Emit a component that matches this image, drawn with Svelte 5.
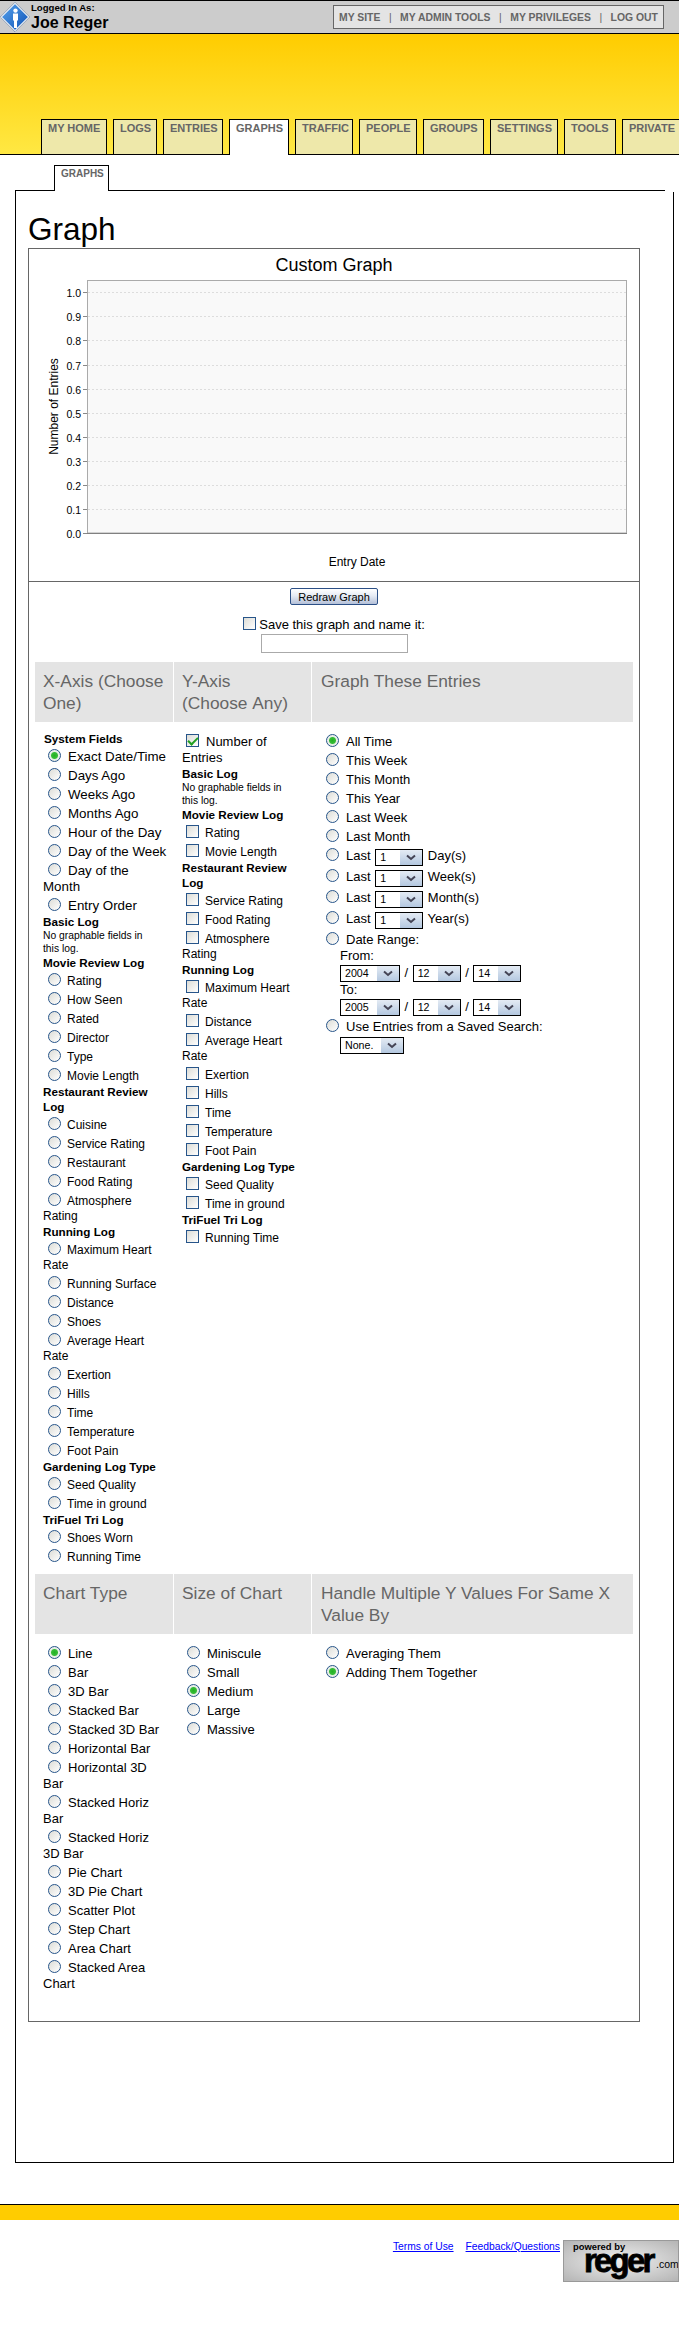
<script>
  const tabs = [['MY HOME',66],['LOGS',44],['ENTRIES',60],['GRAPHS',60],['TRAFFIC',58],['PEOPLE',58],['GROUPS',61],['SETTINGS',68],['TOOLS',52],['PRIVATE',70]];
  const ticks = [0,1,2,3,4,5,6,7,8,9,10];
  const noFields = 'No graphable fields in this log.';
  const xAxis = [
    ['g','System Fields'],
    ['o','Exact Date/Time',true],['o','Days Ago'],['o','Weeks Ago'],['o','Months Ago'],['o','Hour of the Day'],['o','Day of the Week'],['o','Day of the Month'],['o','Entry Order'],
    ['g','Basic Log'],['s',noFields],
    ['g','Movie Review Log'],
    ['m','Rating'],['m','How Seen'],['m','Rated'],['m','Director'],['m','Type'],['m','Movie Length'],
    ['g','Restaurant Review Log'],
    ['m','Cuisine'],['m','Service Rating'],['m','Restaurant'],['m','Food Rating'],['m','Atmosphere Rating'],
    ['g','Running Log'],
    ['m','Maximum Heart Rate'],['m','Running Surface'],['m','Distance'],['m','Shoes'],['m','Average Heart Rate'],['m','Exertion'],['m','Hills'],['m','Time'],['m','Temperature'],['m','Foot Pain'],
    ['g','Gardening Log Type'],
    ['m','Seed Quality'],['m','Time in ground'],
    ['g','TriFuel Tri Log'],
    ['m','Shoes Worn'],['m','Running Time']
  ];
  const yAxis = [
    ['o','Number of Entries',true],
    ['g','Basic Log'],['s',noFields],
    ['g','Movie Review Log'],
    ['m','Rating'],['m','Movie Length'],
    ['g','Restaurant Review Log'],
    ['m','Service Rating'],['m','Food Rating'],['m','Atmosphere Rating'],
    ['g','Running Log'],
    ['m','Maximum Heart Rate'],['m','Distance'],['m','Average Heart Rate'],['m','Exertion'],['m','Hills'],['m','Time'],['m','Temperature'],['m','Foot Pain'],
    ['g','Gardening Log Type'],
    ['m','Seed Quality'],['m','Time in ground'],
    ['g','TriFuel Tri Log'],
    ['m','Running Time']
  ];
  const plainRanges = ['This Week','This Month','This Year','Last Week','Last Month'];
  const lastRanges = ['Day(s)','Week(s)','Month(s)','Year(s)'];
  const chartTypes = ['Line','Bar','3D Bar','Stacked Bar','Stacked 3D Bar','Horizontal Bar','Horizontal 3D Bar','Stacked Horiz Bar','Stacked Horiz 3D Bar','Pie Chart','3D Pie Chart','Scatter Plot','Step Chart','Area Chart','Stacked Area Chart'];
  const sizes = ['Miniscule','Small','Medium','Large','Massive'];
</script>

{#snippet fields(list, type, name)}
  {#each list as [kind, text, checked]}
    {#if kind === 'g'}
      <div class="grp">{text}</div>
    {:else if kind === 's'}
      <div class="small">{text}</div>
    {:else}
      <label class="opt" class:sm={kind === 'm'}><input {type} {name} {checked} />{text}</label>
    {/if}
  {/each}
{/snippet}

{#snippet dateRow(year)}
  <div class="selrow">
    <select class="w60"><option>{year}</option></select><span>/</span>
    <select class="w48"><option>12</option></select><span>/</span>
    <select class="w48"><option>14</option></select>
  </div>
{/snippet}

<div class="page">
  <header class="top">
    <div class="who">
      <svg class="badge" width="30" height="30" viewBox="0 0 30 30" aria-hidden="true">
        <defs>
          <linearGradient id="dia" x1="0" y1="0" x2="1" y2="1">
            <stop offset="0" stop-color="#5aa6ee" />
            <stop offset="1" stop-color="#0b4fb4" />
          </linearGradient>
        </defs>
        <path d="M15 1 29 15 15 29 1 15Z" fill="url(#dia)" stroke="#fff" stroke-width="1.6" />
        <path d="M15 .3 29.7 15 15 29.7 .3 15Z" fill="none" stroke="#33507a" stroke-width=".6" />
        <circle cx="15.5" cy="8.6" r="2.2" fill="#fff" />
        <path d="M13 11.5h5v7h-1V26h-3v-7.5h-1Z" fill="#fff" />
      </svg>
      <div>
        <div class="logged">Logged In As:</div>
        <div class="name">Joe Reger</div>
      </div>
    </div>
    <nav class="tools">
      <span>MY SITE</span><i>|</i><span>MY ADMIN TOOLS</span><i>|</i><span>MY PRIVILEGES</span><i>|</i><span>LOG OUT</span>
    </nav>
  </header>

  <div class="banner">
    {#each tabs as [t, w]}
      <div class="tab" class:on={t === 'GRAPHS'} style:width="{w}px">{t}</div>
    {/each}
  </div>

  <div class="subtabs"><div class="subtab">GRAPHS</div></div>

  <main class="panel">
    <h1>Graph</h1>
    <section class="box">
      <svg class="chart" width="610" height="332" viewBox="0 0 610 332">
        <text x="305" y="22" text-anchor="middle" class="c-title">Custom Graph</text>
        <rect x="58.5" y="31.5" width="539" height="252.5" fill="#f9f9f9" stroke="#aaa" />
        {#each ticks as i}
          {@const y = Math.round(284 - i * 24.07) + 0.5}
          {#if i > 0}
            <line x1="59" x2="597" y1={y} y2={y} stroke="#ddd" stroke-dasharray="2 2" />
          {/if}
          <line x1="54" x2="58" y1={y} y2={y} stroke="#888" />
          <text x="52" y={y + 4} text-anchor="end" class="c-tick">{(i / 10).toFixed(1)}</text>
        {/each}
        <line x1="58" x2="598" y1="284.5" y2="284.5" stroke="#808080" />
        <text transform="translate(29 157.5) rotate(-90)" text-anchor="middle" class="c-axis">Number of Entries</text>
        <text x="328" y="317" text-anchor="middle" class="c-axis">Entry Date</text>
      </svg>

      <form class="form">
        <div class="actions">
          <button type="button" class="redraw">Redraw Graph</button>
          <label class="save"><input type="checkbox" />Save this graph and name it:</label>
          <input class="namefield" type="text" />
        </div>

        <div class="table">
          <h3>X-Axis (Choose One)</h3>
          <h3>Y-Axis (Choose&nbsp;Any)</h3>
          <h3>Graph These Entries</h3>

          <div class="cell sys">{@render fields(xAxis, 'radio', 'x')}</div>
          <div class="cell">{@render fields(yAxis, 'checkbox', 'y')}</div>
          <div class="cell wide">
            <label class="opt"><input type="radio" name="range" checked />All Time</label>
            {#each plainRanges as r}
              <label class="opt"><input type="radio" name="range" />{r}</label>
            {/each}
            {#each lastRanges as r}
              <label class="opt sel"><input type="radio" name="range" />Last <select class="w48 inl"><option>1</option></select> {r}</label>
            {/each}
            <label class="opt"><input type="radio" name="range" />Date Range:</label>
            <div class="indent">
              <div class="lbl">From:</div>
              {@render dateRow(2004)}
              <div class="lbl">To:</div>
              {@render dateRow(2005)}
            </div>
            <label class="opt"><input type="radio" name="range" />Use Entries from a Saved Search:</label>
            <div class="indent none"><select class="w64"><option>None.</option></select></div>
          </div>

          <h3>Chart Type</h3>
          <h3>Size of Chart</h3>
          <h3>Handle Multiple Y Values For Same X Value By</h3>

          <div class="cell">
            {#each chartTypes as c}
              <label class="opt"><input type="radio" name="type" checked={c === 'Line'} />{c}</label>
            {/each}
          </div>
          <div class="cell">
            {#each sizes as s}
              <label class="opt"><input type="radio" name="size" checked={s === 'Medium'} />{s}</label>
            {/each}
          </div>
          <div class="cell wide">
            <label class="opt"><input type="radio" name="multi" />Averaging Them</label>
            <label class="opt"><input type="radio" name="multi" checked />Adding Them Together</label>
          </div>
        </div>
      </form>
    </section>
  </main>

  <footer class="foot">
    <div class="stripe"></div>
    <div class="links">
      <a href="#terms">Terms of Use</a>
      <a href="#feedback">Feedback/Questions</a>
      <div class="reger">
        <span class="pow">powered by</span>
        <span class="rg">reger</span>
        <span class="com">.com</span>
      </div>
    </div>
  </footer>
</div>

<style>
  :global(body) { margin: 0; background: #fff; }
  .page {
    width: 679px;
    height: 2342px;
    overflow: hidden;
    font-family: "Liberation Sans", Arial, sans-serif;
    color: #000;
  }

  .top {
    box-sizing: border-box;
    height: 34px;
    background: #ccc;
    border-top: 1px solid #000;
    border-bottom: 1px solid #000;
    display: flex;
    justify-content: space-between;
    align-items: flex-start;
    padding-right: 15px;
  }
  .who { display: flex; }
  .badge { display: block; margin: 1px 1px 0 0; }
  .logged { font-size: 9.6px; font-weight: bold; line-height: 11px; margin-top: 1px; }
  .name { font-size: 16px; font-weight: bold; line-height: 18px; margin-top: 1px; }
  .tools {
    box-sizing: border-box;
    width: 331px;
    height: 24px;
    margin-top: 4px;
    background: #e4e4e4;
    border: 1px solid #666;
    display: flex;
    justify-content: space-between;
    align-items: center;
    padding: 0 5px;
    font-size: 10.4px;
    font-weight: bold;
    color: #666;
    white-space: nowrap;
  }
  .tools i { font-style: normal; font-weight: normal; }

  .banner {
    box-sizing: border-box;
    height: 121px;
    background: linear-gradient(#ffcc00, #ffe843);
    border-bottom: 1px solid #000;
    display: flex;
    align-items: flex-end;
    gap: 6px;
    padding-left: 41px;
  }
  .tab {
    box-sizing: border-box;
    flex: none;
    height: 35px;
    background: #eee8aa;
    border: 1px solid #000;
    border-bottom: 0;
    padding: 2px 0 0 6px;
    font-size: 11px;
    font-weight: bold;
    line-height: 13px;
    color: #666;
    white-space: nowrap;
  }
  .tab.on {
    background: #fff;
    height: 36px;
    margin-bottom: -1px;
  }

  .subtabs { padding: 10px 0 0 54px; position: relative; z-index: 1; }
  .subtab {
    box-sizing: border-box;
    width: 55px;
    height: 26px;
    margin-bottom: -1px;
    background: #fff;
    border: 1px solid #000;
    border-bottom: 0;
    font-size: 10px;
    font-weight: bold;
    line-height: 12px;
    padding: 2px 0 0 6px;
    color: #666;
  }

  .panel {
    position: relative;
    box-sizing: border-box;
    width: 659px;
    height: 1973px;
    margin-left: 15px;
    border-left: 1px solid #000;
    border-bottom: 1px solid #000;
    padding-left: 12px;
  }
  .panel::before {
    content: "";
    display: block;
    height: 1px;
    margin: 0 9px 0 -12px;
    background: #000;
  }
  .panel::after {
    content: "";
    position: absolute;
    right: 0;
    top: 2px;
    bottom: 0;
    width: 1px;
    background: #000;
  }
  h1 {
    margin: 20px 0 1px;
    font-size: 31.5px;
    font-weight: normal;
    line-height: 36px;
  }
  .box {
    box-sizing: border-box;
    width: 612px;
    height: 1774px;
    border: 1px solid #666;
  }
  .chart { display: block; }
  .c-title { font-size: 18px; font-family: "Liberation Sans", Arial, sans-serif; }
  .c-tick { font-size: 10.5px; font-family: "Liberation Sans", Arial, sans-serif; }
  .c-axis { font-size: 12px; font-family: "Liberation Sans", Arial, sans-serif; }

  .form {
    border-top: 1px solid #666;
    padding: 6px 6px 0;
  }
  .actions {
    display: flex;
    flex-direction: column;
    align-items: center;
  }
  .redraw {
    box-sizing: border-box;
    width: 88px;
    height: 17px;
    padding: 0;
    border: 1px solid #2b4f86;
    border-radius: 2px;
    background: linear-gradient(#fff, #e6ebf4 45%, #b4c0d8);
    font: 11px/14px "Liberation Sans", Arial, sans-serif;
    color: #000;
  }
  .save {
    margin-top: 12px;
    height: 17px;
    font-size: 13px;
    line-height: 16px;
    white-space: nowrap;
  }
  .namefield {
    box-sizing: border-box;
    width: 147px;
    height: 19px;
    margin: 0;
    padding: 0;
    border: 1px solid #aaa;
    background: #fff;
  }

  .table {
    display: grid;
    grid-template-columns: 138px 137px 321px;
    column-gap: 1px;
    margin-top: 9px;
  }
  h3 {
    box-sizing: border-box;
    height: 60px;
    margin: 0;
    padding: 8px 8px 0;
    background: #e4e4e4;
    font-size: 17.33px;
    font-weight: normal;
    line-height: 22px;
    color: #666;
  }
  h3:nth-child(6n+3) { padding-left: 9px; }
  .cell { padding: 9px 6px 9px 8px; min-width: 0; }
  .cell.wide { padding-left: 9px; }

  .grp { font-size: 11.7px; font-weight: bold; line-height: 15px; }
  .small { font-size: 10.3px; line-height: 13px; padding-right: 10px; }
  .sys .grp:first-child { padding-left: 1px; }
  .opt {
    display: block;
    font-size: 13px;
    line-height: 16px;
  }
  .opt.sm { font-size: 12px; line-height: 15px; }
  .sys .opt:not(.sm) { font-size: 13.33px; }

  input[type="radio"], input[type="checkbox"] {
    appearance: none;
    box-sizing: border-box;
    display: inline-block;
    width: 13px;
    height: 13px;
    margin: 3px 7px 0 5px;
    vertical-align: -1px;
    border: 1px solid #27558a;
    background: linear-gradient(135deg, #dcdcd6, #fff);
  }
  .opt.sm input { margin-right: 6px; }
  input[type="radio"] { border-radius: 50%; }
  input[type="radio"]:checked {
    background: radial-gradient(circle at 50% 50%, #22b022 0, #38bd38 3px, #e6eee6 4px, #f4f4f0 100%);
  }
  input[type="checkbox"] { position: relative; margin-left: 4px; }
  input[type="checkbox"]:checked::after {
    content: "";
    position: absolute;
    left: 3px;
    top: 0;
    width: 4px;
    height: 8px;
    border: solid #22a022;
    border-width: 0 2px 2px 0;
    transform: rotate(45deg);
  }
  .save input[type="checkbox"] { margin: 0 3px 0 0; vertical-align: -1px; }

  select {
    appearance: none;
    box-sizing: border-box;
    height: 17px;
    margin: 0;
    padding: 0 0 0 4px;
    border: 1px solid #000;
    border-radius: 0;
    font: 10.67px/15px "Liberation Sans", Arial, sans-serif;
    color: #000;
    background:
      url("data:image/svg+xml,%3Csvg xmlns='http://www.w3.org/2000/svg' width='10' height='7'%3E%3Cpath d='M1 1.5l4 3.5 4-3.5' fill='none' stroke='%23445' stroke-width='2'/%3E%3C/svg%3E") right 6px center no-repeat,
      linear-gradient(#e4ebf4, #b4c8e0) right 0 top 0 / 22px 100% no-repeat,
      #fff;
  }
  .w48 { width: 48px; }
  .w60 { width: 60px; }
  .w64 { width: 64px; }
  select.inl { vertical-align: -1px; margin: 0 1px; }
  .indent { padding-left: 19px; font-size: 13px; line-height: 16px; }
  .selrow {
    display: flex;
    height: 18px;
    padding-top: 1px;
    box-sizing: border-box;
    gap: 4.5px;
    line-height: 15px;
  }
  .lbl { height: 16px; }
  .none { height: 17px; margin-top: 2px; }
  .none select { display: block; }

  .foot { margin-top: 41px; }
  .stripe {
    height: 15px;
    background: #ffcc00;
    border-top: 1px solid #000;
  }
  .links {
    display: flex;
    justify-content: flex-end;
    align-items: flex-start;
    margin-top: 20px;
    font-size: 10.3px;
    line-height: 13px;
  }
  .links a { color: #00f; margin: 0 12px 0 0; }
  .links a + a { margin-right: 3px; }
  .reger {
    position: relative;
    box-sizing: border-box;
    width: 116px;
    height: 42px;
    border: 1px solid #999;
    background: radial-gradient(ellipse at 50% 50%, #f0f0f0, #b4b4b4);
    color: #000;
    font-weight: bold;
    overflow: hidden;
  }
  .reger span { position: absolute; white-space: nowrap; }
  .pow { left: 9px; top: 0; font-size: 9.4px; line-height: 11px; }
  .rg {
    left: 20px;
    top: 1px;
    font-size: 33px;
    line-height: 38px;
    letter-spacing: -2.8px;
    -webkit-text-stroke: .8px #000;
  }
  .com { left: 92px; top: 17px; font-size: 10.5px; line-height: 12px; font-weight: normal; }
</style>
